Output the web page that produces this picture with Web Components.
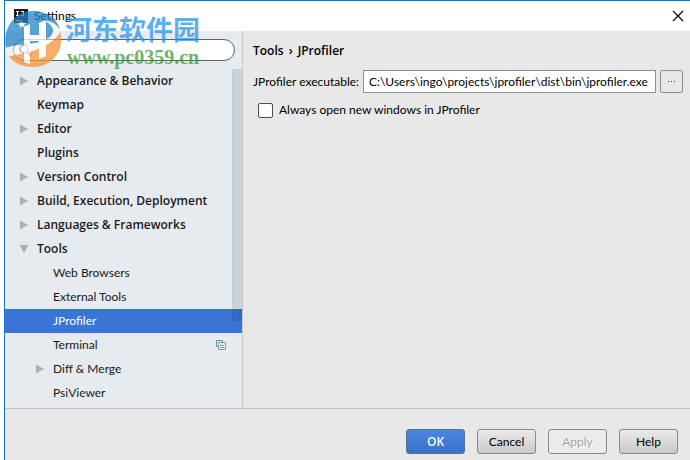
<!DOCTYPE html>
<html lang="en">
<head>
<meta charset="utf-8">
<title>Settings</title>
<style>
  html, body {
    height: 100%;
    margin: 0;
  }

  body {
    --bold: 600 12px/16px "Open Sans", "Noto Sans", sans-serif;

    background: #fff;
    color: #000;
    font: 12px/16px Lato, "Noto Sans", sans-serif;
  }
</style>
</head>
<body>
<settings-window heading="Settings">
  <settings-tree slot="sidebar">
    <tree-item state="collapsed">Appearance &amp; Behavior</tree-item>
    <tree-item>Keymap</tree-item>
    <tree-item state="collapsed">Editor</tree-item>
    <tree-item>Plugins</tree-item>
    <tree-item state="collapsed">Version Control</tree-item>
    <tree-item state="collapsed">Build, Execution, Deployment</tree-item>
    <tree-item state="collapsed">Languages &amp; Frameworks</tree-item>
    <tree-item state="expanded">Tools</tree-item>
    <tree-item level="2">Web Browsers</tree-item>
    <tree-item level="2">External Tools</tree-item>
    <tree-item level="2" selected>JProfiler</tree-item>
    <tree-item level="2" project>Terminal</tree-item>
    <tree-item level="2" state="collapsed">Diff &amp; Merge</tree-item>
    <tree-item level="2">PsiViewer</tree-item>
  </settings-tree>
  <profiler-page></profiler-page>
  <push-button slot="actions" kind="primary">OK</push-button>
  <push-button slot="actions">Cancel</push-button>
  <push-button slot="actions" disabled>Apply</push-button>
  <push-button slot="actions">Help</push-button>
</settings-window>
<site-watermark></site-watermark>

<script>
(() => {
  /**
   * Register an element whose shadow root is cloned from the given markup.
   *
   * @param {string} name
   * @param {string} markup
   * @param {(host: HTMLElement, root: ShadowRoot) => void} [setup]
   */
  const define = (name, markup, setup) => {
    const template = document.createElement('template');
    template.innerHTML = markup;

    customElements.define(name, class extends HTMLElement {
      constructor() {
        super();
        this.attachShadow({ mode: 'open' }).append(template.content.cloneNode(true));
      }

      connectedCallback() {
        if (setup) {
          setup(this, this.shadowRoot);
        }
      }
    });
  };

  define('settings-window', `
    <style>
      :host {
        display: grid;
        grid-template-rows: 30px 1fr 51px;
        box-sizing: border-box;
        height: 100vh;
        margin-left: 4px;
        border: solid #1a72b8;
        border-width: 1px 0 0 1px;
        background: #e8e8e8;
      }

      header {
        display: flex;
        align-items: center;
        gap: 6px;
        padding: 0 6px 0 9px;
        background: #fff;
      }

      h1 {
        flex: 1;
        margin: 0;
        font: inherit;
      }

      .close {
        display: flex;
        padding: 0;
        border: 0;
        background: none;
      }

      .body {
        display: grid;
        grid-template-columns: 238px 1fr;
        min-height: 0;
        border-bottom: 1px solid #c0c3c5;
      }

      aside {
        min-height: 0;
        border-right: 1px solid #c6c8ca;
        background: #e6ebef;
        overflow: hidden;
      }

      footer {
        display: flex;
        align-items: flex-start;
        justify-content: flex-end;
        gap: 12px;
        padding: 20px 12px 0 0;
      }
    </style>
    <header>
      <svg width="14" height="14" viewBox="0 0 14 14" aria-hidden="true">
        <path fill="#1c1c1e" d="M0 0h14v14H0z"/>
        <path fill="none" stroke="#fff" d="M2 2.500h3M3.500 2v5M2 6.500h3M7 2.500h3M9.500 2v4.500H7M2 11.500h5"/>
      </svg>
      <h1></h1>
      <button class="close" aria-label="Close">
        <svg width="12" height="12" viewBox="0 0 12 12"><path fill="none" stroke="#000" stroke-width="1.200" d="M1 1l10 10M11 1L1 11"/></svg>
      </button>
    </header>
    <div class="body">
      <aside><slot name="sidebar"></slot></aside>
      <main><slot></slot></main>
    </div>
    <footer><slot name="actions"></slot></footer>
  `, (host, root) => {
    root.querySelector('h1').textContent = host.getAttribute('heading');
  });

  define('settings-tree', `
    <style>
      :host {
        display: block;
        padding-top: 8px;
      }

      .search {
        display: flex;
        align-items: center;
        gap: 4px;
        box-sizing: border-box;
        height: 22px;
        margin: 0 7px 8px 8px;
        padding: 0 8px 0 4px;
        border: 1px solid #5f6163;
        border-radius: 11px;
        background: #fff;
      }

      input {
        flex: 1;
        min-width: 0;
        padding: 0;
        border: 0;
        outline: 0;
        background: none;
        font: inherit;
      }

      .list {
        position: relative;
      }

      /* The thumb is translucent and lies over the rows. */
      .thumb {
        position: absolute;
        top: 0;
        right: 0;
        width: 10px;
        height: 252px;
        background: rgba(0, 20, 40, 0.11);
        box-shadow: inset 1px 0 rgba(0, 0, 0, 0.04);
        pointer-events: none;
      }
    </style>
    <label class="search">
      <svg width="14" height="14" viewBox="0 0 14 14" aria-hidden="true">
        <circle cx="6" cy="6" r="4" fill="none" stroke="#6e6e6e" stroke-width="1.500"/>
        <path stroke="#6e6e6e" stroke-width="2" d="M9 9l4 4"/>
      </svg>
      <input type="text" aria-label="Search settings">
    </label>
    <div class="list">
      <div role="tree" aria-label="Settings"><slot></slot></div>
      <div class="thumb"></div>
    </div>
  `);

  define('tree-item', `
    <style>
      :host {
        display: flex;
        align-items: center;
        gap: 8px;
        height: 24px;
        padding: 0 16px 0 14px;
        color: #1a1a1a;
        font: var(--bold);
      }

      :host([level="2"]) {
        padding-left: 30px;
        font: inherit;
      }

      :host([selected]) {
        background: #3875d7;
        color: #fff;
      }

      .arrow {
        flex: none;
        fill: #adafb1;
        visibility: hidden;
      }

      :host([state]) .arrow {
        visibility: visible;
      }

      :host([state="expanded"]) .arrow {
        transform: rotate(90deg);
      }

      .label {
        flex: 1;
        white-space: nowrap;
      }

      .copy {
        display: none;
      }

      :host([project]) .copy {
        display: block;
      }
    </style>
    <svg class="arrow" width="10" height="10" viewBox="0 0 10 10" aria-hidden="true"><path d="M1 .5l8 4.500-8 4.500z"/></svg>
    <span class="label"><slot></slot></span>
    <svg class="copy" width="10" height="10" viewBox="0 0 10 10" aria-hidden="true">
      <path fill="none" stroke="#4f96b5" d="M2 6.500H.5v-6h6V2"/>
      <path fill="none" stroke="#999" d="M2.500 2.500h7v7h-7zM4 5.500h4M4 7.500h4"/>
    </svg>
  `, (host) => {
    host.setAttribute('role', 'treeitem');
    host.setAttribute('aria-level', host.getAttribute('level') ?? '1');
    host.setAttribute('aria-selected', String(host.hasAttribute('selected')));
    if (host.hasAttribute('state')) {
      host.setAttribute('aria-expanded', String(host.getAttribute('state') === 'expanded'));
    }
  });

  define('profiler-page', `
    <style>
      :host {
        display: block;
        padding: 12px 7px 0 10px;
      }

      h2 {
        display: flex;
        gap: 5px;
        margin: 0 0 11px;
        font: var(--bold);
      }

      .path {
        display: flex;
        align-items: center;
        gap: 4px;
      }

      input, button {
        box-sizing: border-box;
        height: 23px;
        margin: 0;
        border: 1px solid #8e8e8e;
        font: inherit;
      }

      #executable {
        flex: 1;
        min-width: 0;
        padding: 0 5px;
        background: #fff;
        color: #000;
      }

      button {
        width: 23px;
        padding: 0;
        border-radius: 2px;
        background: #e8e8e8;
      }

      button svg {
        display: block;
        margin: auto;
      }

      .option {
        display: flex;
        align-items: center;
        gap: 6px;
        margin: 9px 0 0 5px;
      }

      #always {
        appearance: none;
        width: 15px;
        height: 15px;
        border: 1px solid #4c4c4c;
        border-radius: 2px;
        background: #fff;
      }

      #always:checked {
        box-shadow: inset 0 0 0 3px #fff;
        background: #3875d7;
      }
    </style>
    <h2><span>Tools</span><span>›</span><span>JProfiler</span></h2>
    <div class="path">
      <label for="executable">JProfiler executable:</label>
      <input id="executable" type="text" value="C:\\Users\\ingo\\projects\\jprofiler\\dist\\bin\\jprofiler.exe">
      <button aria-label="Browse">
        <svg width="9" height="3" viewBox="0 0 9 3"><path fill="#333" d="M1 1h1v1H1zM4 1h1v1H4zM7 1h1v1H7z"/></svg>
      </button>
    </div>
    <div class="option">
      <input id="always" type="checkbox">
      <label for="always">Always open new windows in JProfiler</label>
    </div>
  `);

  define('push-button', `
    <style>
      :host {
        display: block;
      }

      button {
        box-sizing: border-box;
        width: 59px;
        height: 25px;
        margin: 0;
        padding: 0;
        border: 1px solid #878a88;
        border-radius: 3px;
        background: linear-gradient(#eaeaea, #c9c9c9);
        color: #000;
        font: inherit;
      }

      :host([kind="primary"]) button {
        border-color: #5b708c;
        background: linear-gradient(#4a86e0, #3b70cb);
        color: #f4f8ff;
        font: var(--bold);
      }

      button:disabled {
        background: #ebebeb;
        color: #a3a3a3;
        text-shadow: 1px 1px #fff;
      }
    </style>
    <button><slot></slot></button>
  `, (host, root) => {
    root.querySelector('button').disabled = host.hasAttribute('disabled');
  });

  /* Site logo and address laid over the top left corner of the window. */
  define('site-watermark', `
    <style>
      :host {
        position: absolute;
        top: 10px;
        left: 4px;
        display: flex;
        gap: 3px;
        pointer-events: none;
      }

      .text {
        display: flex;
        flex-direction: column;
        padding-top: 3px;
        white-space: nowrap;
      }

      .name {
        color: rgba(42, 150, 237, 0.76);
        font: bold 27px/32px "Noto Sans CJK SC", sans-serif;
      }

      .address {
        padding-left: 2px;
        color: rgba(62, 163, 56, 0.8);
        font: bold 20px/24px "Liberation Serif", serif;
      }
    </style>
    <svg width="58" height="58" viewBox="0 0 58 58" aria-hidden="true">
      <g opacity=".75">
        <path fill="#2485c7" d="M2 38C-2 18 11 1 29 1c14 0 25 8 27 19-4-6-9-9-15-9 6 3 9 7 8 11-2 7-12 11-25 12C14 35 6 36 2 38z"/>
        <path fill="#f5943a" d="M5 46c12-2 28-5 37-11 8-5 13-9 14-14 5 20-8 36-27 36C18 57 9 53 5 46z"/>
        <path fill="#fff" d="M20 17l6-3v11h9V13l7-3v36l-7 3V31h-9v23l-6-2z"/>
        <path fill="#fff" fill-opacity=".6" d="M2 38c4-2 12-3 22-4 13-1 23-5 25-12 1-4-2-8-8-11 6 0 11 3 15 9v1c-1 5-6 9-14 14-9 6-25 9-37 11-1-2-3-5-3-8z"/>
        <path fill="#fff" d="M18 11l1 2h3l-2 2 1 3-3-2-2 2v-3l-3-1 3-1z"/>
      </g>
    </svg>
    <div class="text">
      <span class="name">河东软件园</span>
      <span class="address">www.pc0359.cn</span>
    </div>
  `);
})();
</script>
</body>
</html>
